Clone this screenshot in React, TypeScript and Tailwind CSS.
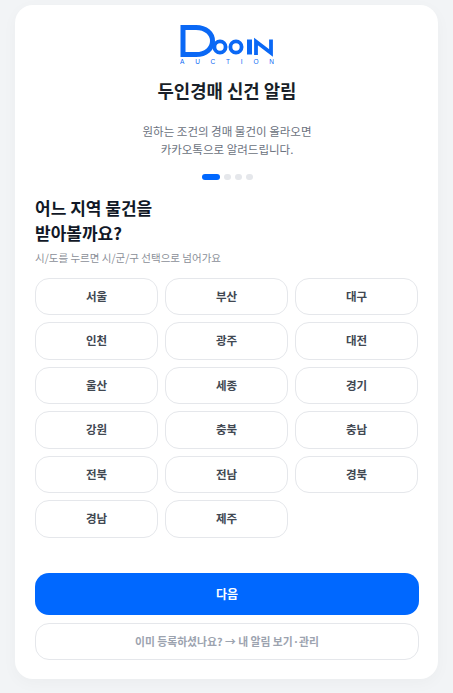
const regions = ["서울","부산","대구","인천","광주","대전","울산","세종","경기","강원","충북","충남","전북","전남","경북","경남","제주"];

function Logo() {
  return (
    <svg width="94" height="40" viewBox="0 0 94 40" aria-label="Dooin Auction" className="block">
      <path d="M3 2.5H16C26 2.5 32.5 8.5 32.5 16S26 29.5 16 29.5H3Z" fill="none" stroke="#0a68f5" strokeWidth="5" />
      <circle cx="40" cy="22" r="5.6" fill="none" stroke="#0a68f5" strokeWidth="3.8" />
      <circle cx="56" cy="22" r="5.6" fill="none" stroke="#0a68f5" strokeWidth="3.8" />
      <rect x="67" y="14.5" width="5" height="15" fill="#0a68f5" />
      <path d="M76 30V16.5L91 28V14.5" fill="none" stroke="#0a68f5" strokeWidth="3.8" />
      <text x="0" y="38.5" fill="#0a68f5" fontSize="6.5" fontFamily="Liberation Sans" textLength="94">AUCTION</text>
    </svg>
  );
}

export default function App() {
  return (
    <div className="min-h-[693px] bg-[#f2f4f6] pl-[15px] pt-[5px] font-['Noto_Sans_CJK_KR','Noto_Sans',sans-serif]">
      <div className="h-[674px] w-[423px] rounded-[18px] bg-white pl-5 pr-[19px] pt-5 shadow-[0_4px_16px_rgba(0,0,0,0.03)]">
        <div className="flex flex-col items-center">
          <Logo />
          <h1 className="mt-[12px] text-[17.8px] leading-[26px] font-bold text-[#191f28]">두인경매 신건 알림</h1>
          <p className="mt-[20px] text-center text-[11.5px] leading-[17.5px] text-[#6b7280]">
            원하는 조건의 경매 물건이 올라오면<br />카카오톡으로 알려드립니다.
          </p>
          <div className="mt-[16px] flex items-center gap-[4.5px]">
            <span className="h-[6px] w-[18px] rounded-full bg-[#0068ff]" />
            <span className="h-[6px] w-[6.5px] rounded-full bg-[#e5e7eb]" />
            <span className="h-[6px] w-[6.5px] rounded-full bg-[#e5e7eb]" />
            <span className="h-[6px] w-[6.5px] rounded-full bg-[#e5e7eb]" />
          </div>
        </div>
        <h2 className="mt-[15px] text-[17px] leading-[25px] font-bold text-[#111827]">어느 지역 물건을<br />받아볼까요?</h2>
        <p className="mt-[5px] text-[10.5px] leading-[16px] text-[#8b8f98]">시/도를 누르면 시/군/구 선택으로 넘어가요</p>
        <div className="mt-[11.6px] grid grid-cols-[repeat(3,123px)] gap-[7px]">
          {regions.map((r) => (
            <button key={r} className="flex h-[37.5px] items-center justify-center rounded-[14px] border border-[#e5e7eb] bg-white text-[11.5px] font-bold text-[#414852]">{r}</button>
          ))}
        </div>
        <button className="mt-[35.4px] flex h-[42px] w-full items-center justify-center rounded-[14px] bg-[#0068ff] text-[12px] font-bold text-white">다음</button>
        <button className="mt-[8px] flex h-[37px] w-full items-center justify-center rounded-[14px] border border-[#e5e7eb] bg-white text-[10.8px] font-bold text-[#9ca3af]">이미 등록하셨나요? → 내 알림 보기·관리</button>
      </div>
    </div>
  );
}
